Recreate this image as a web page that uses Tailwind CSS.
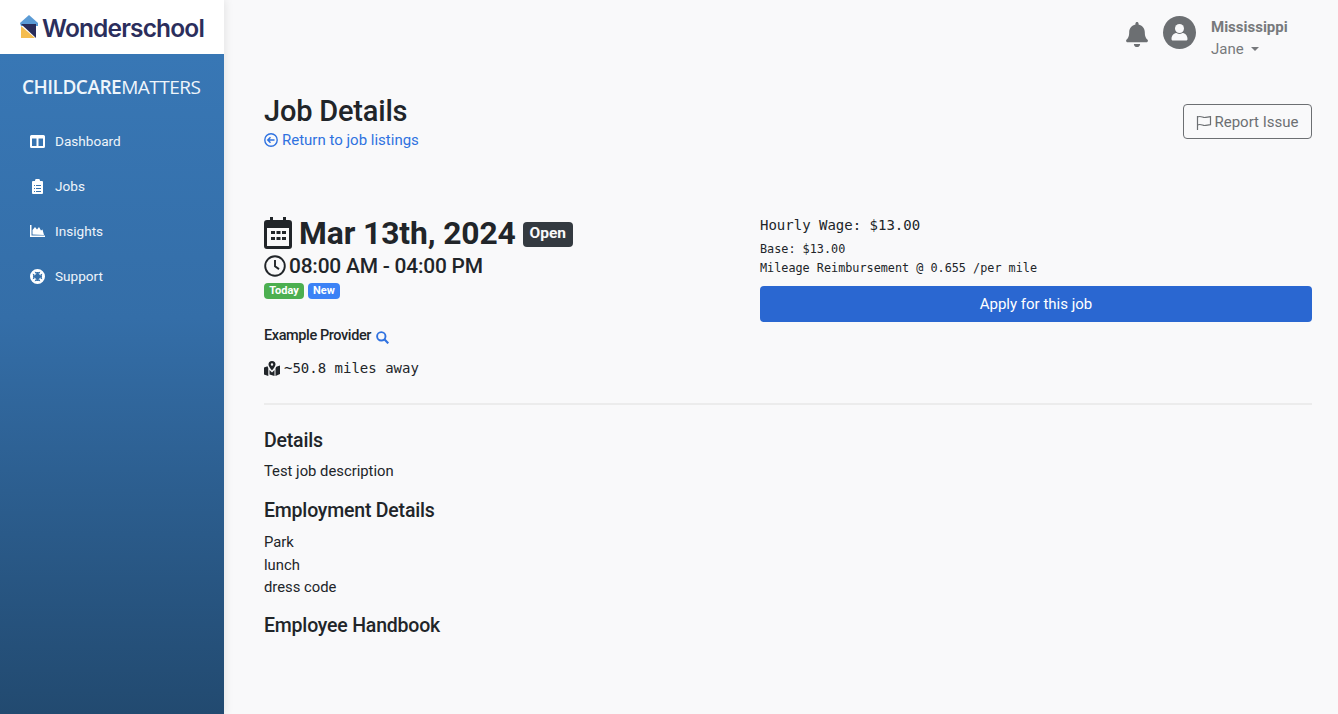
<!DOCTYPE html>
<html lang="en">
<head>
  <meta charset="UTF-8" />
  <title>Job Details</title>
  <script src="https://cdn.jsdelivr.net/npm/@tailwindcss/browser@4"></script>
</head>
<body class="bg-[#f9f9fa] text-[#212529] font-['Roboto',sans-serif] h-[714px] overflow-hidden flex">
  <!-- sidebar -->
  <aside class="w-[224px] h-[714px] shrink-0 flex flex-col shadow-[2px_0_8px_rgba(0,0,0,0.08)]">
    <div class="h-[54px] bg-white flex items-center pl-[20px] gap-[4px] pt-[3px]">
      <svg width="18" height="24" viewBox="0 0 18 24" class="mb-[3px]">
        <path d="M9 0 L18 8 L18 11 L1 11 L0 8 Z" fill="#5b9bd5"/>
        <path d="M1 11 L1 23 L15 23 Z" fill="#f5bd4f"/>
        <path d="M1 9 L16 9 L16 23 Z" fill="#2a2d5a"/>
      </svg>
      <span class="font-['Inter',sans-serif] text-[24.500px] font-semibold tracking-[-0.85px] text-[#2b2e5c]">Wonderschool</span>
    </div>
    <div class="flex-1 bg-gradient-to-b from-[#3877b5] via-[#346ea8] via-40% to-[#224a70] text-white">
      <div class="pl-[22px] pt-[20px] text-[19px] leading-[26px] font-['Open_Sans',sans-serif] tracking-[-0.5px] text-[#eef5fb]"><span class="font-semibold">CHILDCARE</span><span class="font-normal">MATTERS</span></div>
      <nav class="mt-[30px] flex flex-col gap-[23px] pl-[30px] text-[13.600px] leading-[22px] text-[#eef4fa]">
        <a class="flex items-center gap-[10px]">
          <svg width="15" height="13" viewBox="0 0 15 13" class="w-[15px]"><path fill="#fff" fill-rule="evenodd" d="M1.500 0h12A1.500 1.500 0 0 1 15 1.500v10a1.500 1.500 0 0 1-1.500 1.500h-12A1.500 1.500 0 0 1 0 11.500v-10A1.500 1.500 0 0 1 1.500 0zM2 3.500V11h4.500V3.500zM8.500 3.500V11H13V3.500z"/></svg>
          Dashboard
        </a>
        <a class="flex items-center gap-[10px]">
          <svg width="15" height="15" viewBox="0 0 15 15"><path fill="#fff" fill-rule="evenodd" d="M3 2h2a2.500 2.500 0 0 1 5 0h2a1 1 0 0 1 1 1v11a1 1 0 0 1-1 1H3a1 1 0 0 1-1-1V3a1 1 0 0 1 1-1zM4 6v1h1V6zm2 0v1h5V6zM4 9v1h1V9zm2 0v1h5V9zm-2 3v1h1v-1zm2 0v1h5v-1z"/></svg>
          Jobs
        </a>
        <a class="flex items-center gap-[10px]">
          <svg width="15" height="12" viewBox="0 0 15 12"><path fill="#fff" d="M0 0h1.500v10.500H15V12H0z"/><path fill="#fff" d="M2.500 9.500V5L5 2l2 2.500L9 2l2 3.500 1.500-1 1.500 5.500z"/></svg>
          Insights
        </a>
        <a class="flex items-center gap-[10px]">
          <svg width="15" height="15" viewBox="0 0 15 15"><circle cx="7.500" cy="7.500" r="6" fill="none" stroke="#fff" stroke-width="3"/><path stroke="#fff" stroke-width="2.800" d="M3 3l2.500 2.500M12 3L9.500 5.500M3 12l2.500-2.500M12 12L9.500 9.500"/><path stroke="#3774b1" stroke-width="1" d="M5.200 2.800L5.800 4.500M2.800 5.200L4.500 5.800M9.800 2.800L9.200 4.500M12.200 5.200L10.500 5.800M5.200 12.200L5.800 10.500M2.800 9.800L4.500 9.200M9.800 12.200L9.200 10.500M12.200 9.800L10.500 9.200"/></svg>
          Support
        </a>
      </nav>
    </div>
  </aside>

  <main class="flex-1 min-w-0 pl-[40px] pr-[26px]">
    <!-- top bar -->
    <header class="h-[62px] pt-[16px] flex justify-end items-start pr-[24px]">
      <svg width="22" height="25" viewBox="0 0 448 512" class="mt-[6px] mr-[15px]"><path fill="#6c6f72" d="M224 512c35.300 0 64-28.700 64-64H160c0 35.300 28.700 64 64 64zm215.400-149.700c-19.300-20.800-55.500-52-55.500-154.300 0-77.700-54.500-139.900-127.900-155.200V32c0-17.700-14.300-32-32-32s-32 14.300-32 32v20.800C118.600 68.100 64.100 130.300 64.100 208c0 102.300-36.200 133.500-55.500 154.300-6 6.400-8.700 14.100-8.600 21.700.1 16.400 13 32 32.100 32h383.800c19.100 0 32-15.600 32.100-32 .1-7.600-2.600-15.300-8.600-21.700z"/></svg>
      <svg width="33" height="33" viewBox="0 0 33 33" class="mr-[15px]"><circle cx="16.500" cy="16.500" r="16.500" fill="#6c6f72"/><circle cx="16.500" cy="12.500" r="4.500" fill="#f9f9fa"/><path fill="#f9f9fa" d="M8.500 23c0-4 3-6 5-6 1 .6 2 .9 3 .9s2-.3 3-.9c2 0 5 2 5 6 0 1-.8 1.500-1.500 1.500h-13C9.300 24.500 8.500 24 8.500 23z"/></svg>
      <div class="w-[77px] text-[#77797c]">
        <div class="text-[15px] leading-[22px] font-bold whitespace-nowrap">Mississippi</div>
        <div class="text-[15px] leading-[22px] flex items-center gap-[7px]">Jane<span class="border-x-[4px] border-x-transparent border-t-[4px] border-t-[#77797c]"></span></div>
      </div>
    </header>

    <!-- title row -->
    <div class="flex justify-between items-start mt-[31px]">
      <div>
        <h1 class="text-[29px] leading-[36px] font-medium tracking-[-0.2px]">Job Details</h1>
        <a class="flex items-center gap-[4px] text-[15px] leading-[22px] text-[#2f72e0]">
          <svg width="14" height="14" viewBox="0 0 14 14"><circle cx="7" cy="7" r="6.200" fill="none" stroke="#2f72e0" stroke-width="1.400"/><path fill="none" stroke="#2f72e0" stroke-width="1.500" d="M10.500 7H4M6.500 4.300L3.800 7l2.700 2.700"/></svg>
          Return to job listings
        </a>
      </div>
      <button class="mt-[11px] w-[129px] h-[35px] pt-[1px] border border-[#6c6f72] rounded-[4px] text-[#6c6f72] text-[15px] flex items-center justify-center gap-[2px]">
        <svg width="16" height="15" viewBox="0 0 16 15"><path fill="none" stroke="#6c6f72" stroke-width="1.200" d="M1.500 1v14M1.500 2c3-1.500 5 .5 7 .5s4-.8 6-.8v8c-2 0-4 .8-6 .8s-4-2-7-.5"/></svg>
        Report Issue
      </button>
    </div>

    <!-- job summary -->
    <section class="flex mt-[65px]">
      <div class="w-[496px] shrink-0">
        <div class="flex items-center h-[36px]">
          <svg width="28" height="32" viewBox="0 0 28 32" class="mb-[2px]"><path fill="#212529" fill-rule="evenodd" d="M6 0h3v3h10V0h3v3h3a3 3 0 0 1 3 3v23a3 3 0 0 1-3 3H3a3 3 0 0 1-3-3V6a3 3 0 0 1 3-3h3zM3 11v18h22V11zM7 14h4v3H7zm5.500 0h4v3h-4zm5.500 0h4v3h-4zM7 20h4v3H7zm5.500 0h4v3h-4zm5.500 0h4v3h-4z"/></svg>
          <span class="ml-[7px] mb-[2px] text-[31.800px] leading-[36px] font-bold tracking-[-0.1px]">Mar 13th, 2024</span>
          <span class="ml-[7px] h-[25px] w-[50px] rounded-[4px] bg-[#343a40] text-[#f9f9fa] text-[15.500px] font-bold flex items-center justify-center">Open</span>
        </div>
        <div class="flex items-center h-[28px]">
          <svg width="22" height="22" viewBox="0 0 22 22"><circle cx="11" cy="11" r="9.800" fill="none" stroke="#212529" stroke-width="1.900"/><path fill="none" stroke="#212529" stroke-width="1.900" d="M11 5v6.300l4 2.800"/></svg>
          <span class="ml-[3px] text-[20.900px] leading-[28px] font-medium tracking-[-0.2px]">08:00 AM - 04:00 PM</span>
        </div>
        <div class="flex gap-[4px] mt-[3px]">
          <span class="h-[16px] w-[40px] rounded-[4px] bg-[#4caf50] text-white text-[11px] font-bold flex items-center justify-center">Today</span>
          <span class="h-[16px] w-[32px] rounded-[4px] bg-[#3b82f6] text-white text-[11px] font-bold flex items-center justify-center">New</span>
        </div>
        <div class="flex items-center mt-[26px] h-[22px] text-[14.500px] font-medium tracking-[-0.4px]">
          Example Provider
          <svg width="13" height="13" viewBox="0 0 13 13" class="ml-[5px] mt-[2px]"><circle cx="5.300" cy="5.300" r="4.200" fill="none" stroke="#2f72e0" stroke-width="1.900"/><path stroke="#2f72e0" stroke-width="2.200" d="M8.300 8.300L12.300 12.300"/></svg>
        </div>
        <div class="flex items-center mt-[10px] h-[22px]">
          <svg width="16" height="15" viewBox="0 0 16 15"><path fill="#212529" fill-rule="evenodd" d="M8 0a3.500 3.500 0 0 1 3.500 3.500C11.500 5.500 8 9.500 8 9.500S4.500 5.500 4.500 3.500A3.500 3.500 0 0 1 8 0zm0 2.300a1.200 1.200 0 1 0 0 2.400 1.200 1.200 0 0 0 0-2.400z"/><path fill="#212529" d="M0 6.500l3.500-1.300.8 2V15L0 13.500zM5.500 9l2.500 2.600L10.500 9v6l-5-1.500zM11.500 7.500l.8-1.800L16 4.500V13l-4.500 2z"/></svg>
          <span class="ml-[4px] font-['DejaVu_Sans_Mono',monospace] text-[14px] leading-[22px]">~50.8 miles away</span>
        </div>
      </div>
      <div class="flex-1 font-['DejaVu_Sans_Mono',monospace]">
        <div class="text-[14px] leading-[22px] mt-[-2px]">Hourly Wage: $13.00</div>
        <div class="text-[11.800px] leading-[19px] mt-[4px]">Base: $13.00</div>
        <div class="text-[11.800px] leading-[19px]">Mileage Reimbursement @ 0.655 /per mile</div>
        <button class="mt-[8px] w-full h-[36px] rounded-[4px] bg-[#2a67d1] text-white text-[15px] font-['Roboto',sans-serif]">Apply for this job</button>
      </div>
    </section>

    <hr class="border-t-2 border-[#ececec] mt-[24px]" />

    <!-- description -->
    <section class="mt-[24px]">
      <h2 class="text-[19.500px] leading-[24px] font-medium tracking-[-0.2px]">Details</h2>
      <p class="mt-[7px] text-[14.800px] leading-[22px]">Test job description</p>
      <h2 class="mt-[17px] text-[19.500px] leading-[24px] font-medium tracking-[-0.2px]">Employment Details</h2>
      <p class="mt-[8px] text-[14.800px] leading-[22.500px]">Park<br />lunch<br />dress code</p>
      <h2 class="mt-[15px] text-[19.500px] leading-[24px] font-medium tracking-[-0.2px]">Employee Handbook</h2>
    </section>
  </main>
</body>
</html>
